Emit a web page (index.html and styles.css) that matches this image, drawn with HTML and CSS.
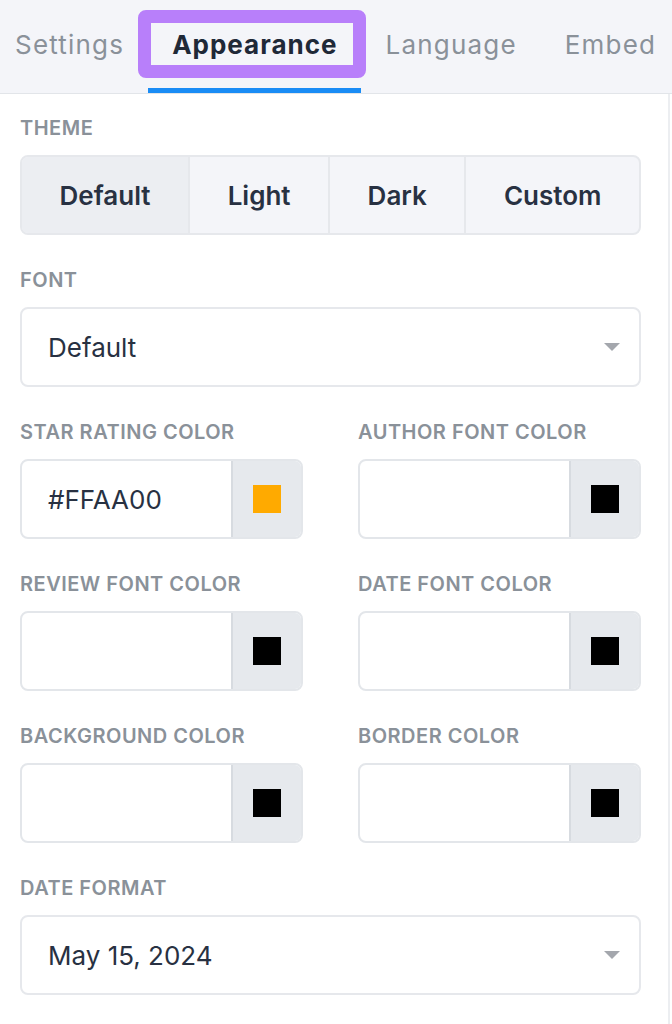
FILE: index.html
```html
<!DOCTYPE html>
<html lang="en">
<head>
  <meta charset="UTF-8">
  <title>Widget - Appearance</title>
  <link rel="stylesheet" href="styles.css">
</head>
<body>
  <!-- TABS -->
  <div class="tabs">
    <div class="tab-list">
      <div class="tab">Settings</div>
      <div class="tab active">Appearance</div>
      <div class="tab">Language</div>
      <div class="tab">Embed</div>
    </div>
  </div>

  <!-- APPEARANCE PANEL -->
  <div class="panel">
    <div class="field">
      <label class="field-label">Theme</label>
      <div class="segmented">
        <button type="button" class="segment selected">Default</button>
        <button type="button" class="segment">Light</button>
        <button type="button" class="segment">Dark</button>
        <button type="button" class="segment">Custom</button>
      </div>
    </div>

    <div class="field">
      <label class="field-label">Font</label>
      <div class="select">
        <span>Default</span>
        <span class="caret"></span>
      </div>
    </div>

    <div class="field-grid">
      <div class="field">
        <label class="field-label">Star rating color</label>
        <div class="color-input">
          <div class="color-value">#FFAA00</div>
          <div class="swatch-box"><span class="swatch orange"></span></div>
        </div>
      </div>
      <div class="field">
        <label class="field-label">Author font color</label>
        <div class="color-input">
          <div class="color-value"></div>
          <div class="swatch-box"><span class="swatch"></span></div>
        </div>
      </div>
      <div class="field">
        <label class="field-label">Review font color</label>
        <div class="color-input">
          <div class="color-value"></div>
          <div class="swatch-box"><span class="swatch"></span></div>
        </div>
      </div>
      <div class="field">
        <label class="field-label">Date font color</label>
        <div class="color-input">
          <div class="color-value"></div>
          <div class="swatch-box"><span class="swatch"></span></div>
        </div>
      </div>
      <div class="field">
        <label class="field-label">Background color</label>
        <div class="color-input">
          <div class="color-value"></div>
          <div class="swatch-box"><span class="swatch"></span></div>
        </div>
      </div>
      <div class="field">
        <label class="field-label">Border color</label>
        <div class="color-input">
          <div class="color-value"></div>
          <div class="swatch-box"><span class="swatch"></span></div>
        </div>
      </div>
    </div>

    <div class="field">
      <label class="field-label">Date format</label>
      <div class="select">
        <span>May 15, 2024</span>
        <span class="caret"></span>
      </div>
    </div>
  </div>
</body>
</html>
```

FILE: styles.css
```css
body {
  margin: 0;
  font-family: Inter, "Noto Sans", sans-serif;
  background-color: white;
  color: #283142;
}

.tabs {
  background-color: #f4f5f9;
  border-bottom: 1px solid #e2e5e9;
  height: 93px;
  overflow: hidden;
}

.tab-list {
  display: flex;
  margin-left: -9px;
}

.tab {
  position: relative;
  padding: 29px 24px 27px;
  border-bottom: 6px solid transparent;
  font-size: 26px;
  line-height: 32px;
  color: #8a9199;
  letter-spacing: 1.2px;
  white-space: nowrap;
}

.tab.active {
  color: #1f2937;
  font-weight: 700;
  letter-spacing: 1px;
  border-bottom-color: #1a8cf5;
}

/* highlight around the active tab */
.tab.active::after {
  content: "";
  position: absolute;
  left: -10px;
  right: -5px;
  top: 10px;
  height: 68px;
  box-sizing: border-box;
  border: 13px solid #b87ffa;
  border-radius: 8px;
}

.panel {
  width: 670px;
  box-sizing: border-box;
  border-right: 2px solid #eceef1;
  padding: 22px 27px 30px 20px;
}

.field {
  margin-bottom: 33px;
}

.field-label {
  display: block;
  font-size: 20px;
  line-height: 24px;
  font-weight: 600;
  letter-spacing: 0.5px;
  text-transform: uppercase;
  color: #8a9199;
  margin-bottom: 15px;
}

.field-grid {
  display: grid;
  grid-template-columns: 1fr 1fr;
  column-gap: 55px;
}

.segmented {
  display: flex;
  height: 80px;
  box-sizing: border-box;
  border: 2px solid #e6e8ec;
  border-radius: 8px;
  overflow: hidden;
  background-color: #f4f5f9;
}

.segment {
  flex: 1 1 auto;
  border: none;
  border-left: 2px solid #e6e8ec;
  background: none;
  font-family: inherit;
  font-size: 26px;
  font-weight: 600;
  color: #283142;
  padding: 0;
  cursor: pointer;
}

.segment:first-child {
  border-left: none;
}

.segment.selected {
  background-color: #eceef2;
}

.select {
  display: flex;
  align-items: center;
  justify-content: space-between;
  height: 80px;
  box-sizing: border-box;
  border: 2px solid #e6e8ec;
  border-radius: 8px;
  padding: 0 19px 0 26px;
  font-size: 26px;
}

.caret {
  width: 0;
  height: 0;
  border-left: 8.5px solid transparent;
  border-right: 8.5px solid transparent;
  border-top: 8px solid #a4a7ad;
}

.color-input {
  display: flex;
  height: 80px;
  box-sizing: border-box;
  border: 2px solid #e3e6ea;
  border-radius: 8px;
  overflow: hidden;
}

.color-value {
  flex: 1;
  display: flex;
  align-items: center;
  padding-left: 26px;
  font-size: 26px;
}

.swatch-box {
  width: 70px;
  box-sizing: border-box;
  border-left: 2px solid #d7dbe0;
  background-color: #e6e9ed;
  display: flex;
  align-items: center;
  justify-content: center;
}

.swatch {
  width: 28px;
  height: 28px;
  background-color: black;
}

.swatch.orange {
  background-color: #ffaa00;
}
```
